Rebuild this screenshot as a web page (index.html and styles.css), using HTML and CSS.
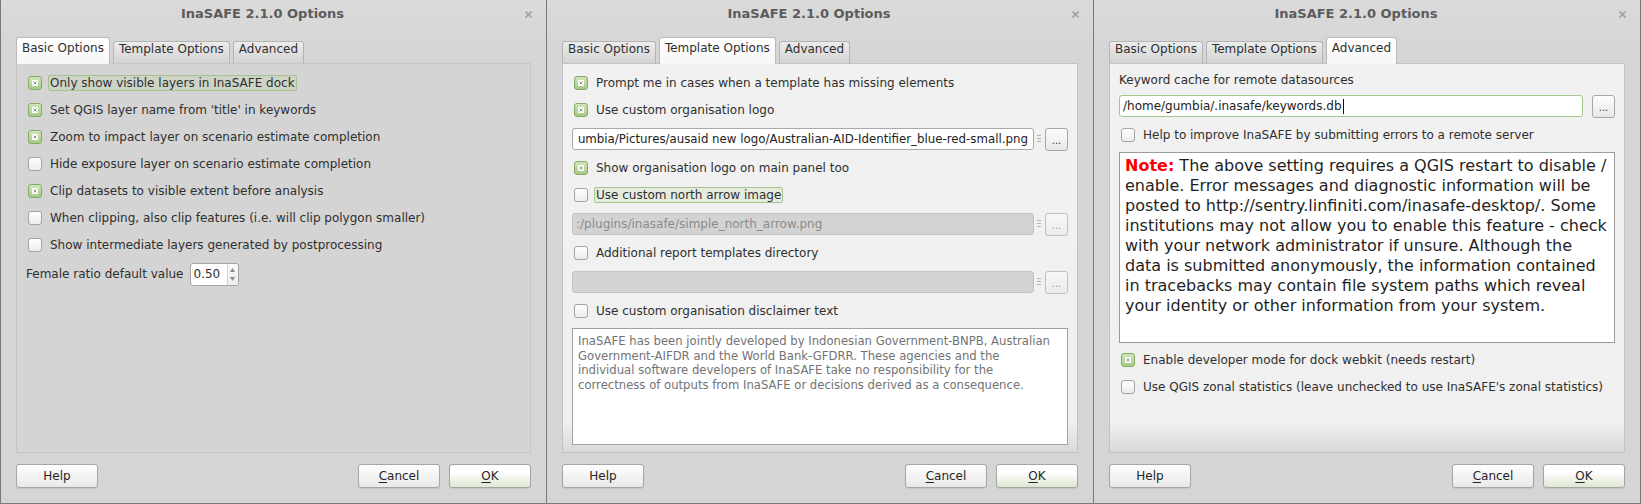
FILE: index.html
```html
<!DOCTYPE html>
<html>
<head>
<meta charset="utf-8">
<title>InaSAFE 2.1.0 Options</title>
<link rel="stylesheet" href="styles.css">
</head>
<body>
<div class="desk">

  <!-- Window 1 : Basic Options -->
  <div class="win">
    <div class="titlebar">
      <div class="title">InaSAFE 2.1.0 Options</div>
      <div class="close"><svg width="7" height="7" viewBox="0 0 7 7"><path d="M0.5 0.5L6.5 6.5M6.5 0.5L0.5 6.5" stroke="#a2a2a2" stroke-width="1.6"/></svg></div>
    </div>
    <div class="tabs">
      <div class="tab active">Basic Options</div>
      <div class="tab">Template Options</div>
      <div class="tab">Advanced</div>
    </div>
    <div class="pane pane-gray">
      <div class="cb-row"><span class="box on"><svg class="mk" width="6" height="6" viewBox="0 0 6 6"><rect width="6" height="6" fill="#fff"/><path d="M1.5 1.5L4.5 4.5M4.5 1.5L1.5 4.5" stroke="#7f8f72" stroke-width="0.9"/></svg></span><span class="lbl focus">Only show visible layers in InaSAFE dock</span></div>
      <div class="cb-row"><span class="box on"><svg class="mk" width="6" height="6" viewBox="0 0 6 6"><rect width="6" height="6" fill="#fff"/><path d="M1.5 1.5L4.5 4.5M4.5 1.5L1.5 4.5" stroke="#7f8f72" stroke-width="0.9"/></svg></span><span class="lbl">Set QGIS layer name from 'title' in keywords</span></div>
      <div class="cb-row"><span class="box on"><svg class="mk" width="6" height="6" viewBox="0 0 6 6"><rect width="6" height="6" fill="#fff"/><path d="M1.5 1.5L4.5 4.5M4.5 1.5L1.5 4.5" stroke="#7f8f72" stroke-width="0.9"/></svg></span><span class="lbl">Zoom to impact layer on scenario estimate completion</span></div>
      <div class="cb-row"><span class="box"></span><span class="lbl">Hide exposure layer on scenario estimate completion</span></div>
      <div class="cb-row"><span class="box on"><svg class="mk" width="6" height="6" viewBox="0 0 6 6"><rect width="6" height="6" fill="#fff"/><path d="M1.5 1.5L4.5 4.5M4.5 1.5L1.5 4.5" stroke="#7f8f72" stroke-width="0.9"/></svg></span><span class="lbl">Clip datasets to visible extent before analysis</span></div>
      <div class="cb-row"><span class="box"></span><span class="lbl">When clipping, also clip features (i.e. will clip polygon smaller)</span></div>
      <div class="cb-row"><span class="box"></span><span class="lbl">Show intermediate layers generated by postprocessing</span></div>
      <div class="spin-row">
        <span class="lbl">Female ratio default value</span>
        <div class="spin">
          <span class="spin-val">0.50</span>
          <span class="spin-arrows">
            <svg width="5" height="4" viewBox="0 0 5 4"><path d="M0 4L2.5 0L5 4Z" fill="#8a8a8a"/></svg>
            <svg width="5" height="4" viewBox="0 0 5 4"><path d="M0 0L2.5 4L5 0Z" fill="#8a8a8a"/></svg>
          </span>
        </div>
      </div>
    </div>
    <div class="buttons">
      <div class="btn">Help</div>
      <div class="spacer"></div>
      <div class="btn"><span><u>C</u>ancel</span></div>
      <div class="btn ok"><span><u>O</u>K</span></div>
    </div>
  </div>

  <!-- Window 2 : Template Options -->
  <div class="win">
    <div class="titlebar">
      <div class="title">InaSAFE 2.1.0 Options</div>
      <div class="close"><svg width="7" height="7" viewBox="0 0 7 7"><path d="M0.5 0.5L6.5 6.5M6.5 0.5L0.5 6.5" stroke="#a2a2a2" stroke-width="1.6"/></svg></div>
    </div>
    <div class="tabs">
      <div class="tab">Basic Options</div>
      <div class="tab active">Template Options</div>
      <div class="tab">Advanced</div>
    </div>
    <div class="pane pane-light">
      <div class="cb-row"><span class="box on"><svg class="mk" width="6" height="6" viewBox="0 0 6 6"><rect width="6" height="6" fill="#fff"/><path d="M1.5 1.5L4.5 4.5M4.5 1.5L1.5 4.5" stroke="#7f8f72" stroke-width="0.9"/></svg></span><span class="lbl">Prompt me in cases when a template has missing elements</span></div>
      <div class="cb-row"><span class="box on"><svg class="mk" width="6" height="6" viewBox="0 0 6 6"><rect width="6" height="6" fill="#fff"/><path d="M1.5 1.5L4.5 4.5M4.5 1.5L1.5 4.5" stroke="#7f8f72" stroke-width="0.9"/></svg></span><span class="lbl">Use custom organisation logo</span></div>
      <div class="file-row">
        <div class="line scrolled"><span>umbia/Pictures/ausaid new logo/Australian-AID-Identifier_blue-red-small.png</span></div>
        <span class="grip"></span>
        <div class="dots">...</div>
      </div>
      <div class="cb-row"><span class="box on"><svg class="mk" width="6" height="6" viewBox="0 0 6 6"><rect width="6" height="6" fill="#fff"/><path d="M1.5 1.5L4.5 4.5M4.5 1.5L1.5 4.5" stroke="#7f8f72" stroke-width="0.9"/></svg></span><span class="lbl">Show organisation logo on main panel too</span></div>
      <div class="cb-row"><span class="box"></span><span class="lbl focus">Use custom north arrow image</span></div>
      <div class="file-row">
        <div class="line disabled"><span>:/plugins/inasafe/simple_north_arrow.png</span></div>
        <span class="grip"></span>
        <div class="dots off">...</div>
      </div>
      <div class="cb-row"><span class="box"></span><span class="lbl">Additional report templates directory</span></div>
      <div class="file-row">
        <div class="line disabled"></div>
        <span class="grip"></span>
        <div class="dots off">...</div>
      </div>
      <div class="cb-row"><span class="box"></span><span class="lbl">Use custom organisation disclaimer text</span></div>
      <div class="disclaimer">InaSAFE has been jointly developed by Indonesian Government-BNPB, Australian<br>Government-AIFDR and the World Bank-GFDRR. These agencies and the<br>individual software developers of InaSAFE take no responsibility for the<br>correctness of outputs from InaSAFE or decisions derived as a consequence.</div>
    </div>
    <div class="buttons">
      <div class="btn">Help</div>
      <div class="spacer"></div>
      <div class="btn"><span><u>C</u>ancel</span></div>
      <div class="btn ok"><span><u>O</u>K</span></div>
    </div>
  </div>

  <!-- Window 3 : Advanced -->
  <div class="win">
    <div class="titlebar">
      <div class="title">InaSAFE 2.1.0 Options</div>
      <div class="close"><svg width="7" height="7" viewBox="0 0 7 7"><path d="M0.5 0.5L6.5 6.5M6.5 0.5L0.5 6.5" stroke="#a2a2a2" stroke-width="1.6"/></svg></div>
    </div>
    <div class="tabs">
      <div class="tab">Basic Options</div>
      <div class="tab">Template Options</div>
      <div class="tab active">Advanced</div>
    </div>
    <div class="pane pane-light pane-adv">
      <div class="label-row">Keyword cache for remote datasources</div>
      <div class="edit-row">
        <div class="line focused"><span>/home/gumbia/.inasafe/keywords.db</span><span class="caret"></span></div>
        <div class="dots">...</div>
      </div>
      <div class="cb-row"><span class="box"></span><span class="lbl">Help to improve InaSAFE by submitting errors to a remote server</span></div>
      <div class="note"><b class="note-head">Note:</b> The above setting requires a QGIS restart to disable /<br>enable. Error messages and diagnostic information will be<br>posted to http://sentry.linfiniti.com/inasafe-desktop/. Some<br>institutions may not allow you to enable this feature - check<br>with your network administrator if unsure. Although the<br>data is submitted anonymously, the information contained<br>in tracebacks may contain file system paths which reveal<br>your identity or other information from your system.</div>
      <div class="cb-row"><span class="box on"><svg class="mk" width="6" height="6" viewBox="0 0 6 6"><rect width="6" height="6" fill="#fff"/><path d="M1.5 1.5L4.5 4.5M4.5 1.5L1.5 4.5" stroke="#7f8f72" stroke-width="0.9"/></svg></span><span class="lbl">Enable developer mode for dock webkit (needs restart)</span></div>
      <div class="cb-row"><span class="box"></span><span class="lbl">Use QGIS zonal statistics (leave unchecked to use InaSAFE's zonal statistics)</span></div>
    </div>
    <div class="buttons">
      <div class="btn">Help</div>
      <div class="spacer"></div>
      <div class="btn"><span><u>C</u>ancel</span></div>
      <div class="btn ok"><span><u>O</u>K</span></div>
    </div>
  </div>

</div>
</body>
</html>
```

FILE: styles.css
```css
* { box-sizing: border-box; }

html, body {
  margin: 0;
  padding: 0;
  width: 1641px;
  height: 504px;
  overflow: hidden;
  background: #d6d6d6;
}

body {
  font-family: "DejaVu Sans", "Liberation Sans", sans-serif;
  font-size: 12px;
  color: #2f2f2f;
}

.desk {
  display: flex;
  width: 1641px;
  height: 504px;
}

.win {
  width: 547px;
  height: 504px;
  flex: none;
  display: flex;
  flex-direction: column;
  background: linear-gradient(#dadada, #d5d5d5 60px, #d5d5d5);
  border-left: 1px solid #787878;
  border-bottom: 1px solid #7a7a7a;
}

.win:first-child { width: 546px; }

.win:last-child {
  width: 548px;
  border-right: 1px solid #787878;
}

/* title bar */
.titlebar {
  height: 28px;
  display: flex;
  align-items: center;
}

.title {
  flex: 1;
  text-align: center;
  font-weight: bold;
  font-size: 13px;
  color: #5c5c5c;
  line-height: 16px;
}

.close {
  width: 22px;
  display: flex;
  align-items: center;
  padding-left: 1px;
  height: 16px;
}

/* tabs */
.tabs {
  display: flex;
  align-items: flex-end;
  height: 26px;
  margin: 9px 0 0 15px;
}

.tab {
  height: 22px;
  padding: 0 5px;
  margin-right: 3px;
  line-height: 14px;
  border: 1px solid #b4b4b4;
  border-bottom: none;
  border-radius: 3px 3px 0 0;
  background: linear-gradient(#ececec, #d3d3d3);
  color: #2f2f2f;
  white-space: nowrap;
}

.tab.active {
  padding-top: 3px;
  background: linear-gradient(#ffffff, #f6f6f6);
  border-color: #bababa;
  position: relative;
  z-index: 1;
  margin-bottom: -1px;
  height: 27px;
}

/* pane */
.pane {
  height: 390px;
  margin: 0 15px;
  border: 1px solid #c4c4c4;
  padding: 9px 9px 0 9px;
  display: flex;
  flex-direction: column;
  gap: 7px;
}

.pane-gray {
  background: #d4d4d4;
  border-color: #c6c6c6;
}

.pane-light {
  background: linear-gradient(#f1f1f1 0, #f0f0f0 calc(100% - 30px), #d9d9d9 100%);
  border-color: #c3c3c3;
}

.pane-adv { padding-top: 6px; }

/* checkbox rows */
.cb-row {
  height: 20px;
  flex: none;
  display: flex;
  align-items: center;
  padding-left: 2px;
  white-space: nowrap;
}

.box {
  width: 14px;
  height: 14px;
  flex: none;
  margin-right: 8px;
  border: 1px solid #a3a3a3;
  border-radius: 3px;
  background: linear-gradient(#ffffff, #ececec);
  display: flex;
  align-items: center;
  justify-content: center;
}

.box.on {
  border-color: #86aa66;
  background: linear-gradient(#cfe6b9, #a6ca86);
}

.mk { display: block; }

.lbl {
  line-height: 14px;
  white-space: nowrap;
}

.lbl.focus {
  margin-left: -2px;
  padding: 0 1px;
  border: 1px solid #a8c48e;
  border-radius: 2px;
  background: rgba(166, 204, 128, 0.16);
}

/* spin box */
.spin-row {
  height: 24px;
  flex: none;
  display: flex;
  align-items: center;
}

.spin {
  margin-left: 6px;
  width: 49px;
  height: 23px;
  display: flex;
  border: 1px solid #a4a4a4;
  border-radius: 3px;
  background: #fff;
}

.spin-val {
  flex: 1;
  padding-left: 3px;
  line-height: 21px;
}

.spin-arrows {
  width: 11px;
  border-left: 1px solid #d2d2d2;
  display: flex;
  flex-direction: column;
  align-items: center;
  justify-content: center;
  gap: 5px;
  background: linear-gradient(#fafafa, #ededed);
  border-radius: 0 2px 2px 0;
}

.spin-arrows svg { display: block; }

/* line edits */
.file-row, .edit-row {
  height: 24px;
  flex: none;
  display: flex;
  align-items: center;
}

.edit-row { margin-top: -3px; }

.line {
  flex: 1;
  height: 22px;
  border: 1px solid #a8a8a8;
  border-radius: 3px;
  background: #fff;
  display: flex;
  align-items: center;
  overflow: hidden;
  white-space: nowrap;
  padding: 0 3px;
  color: #222;
}

.line.scrolled {
  justify-content: flex-end;
  padding: 0 5px 0 1px;
  font-size: 11.8px;
}

.line.disabled {
  background: #d3d3d3;
  border-color: #c3c3c3;
  color: #8b8b8b;
}

.line.focused {
  border-color: #a6c58a;
  padding-left: 3px;
}

.caret {
  width: 1px;
  height: 15px;
  background: #111;
  margin-left: 1px;
}

.grip {
  width: 4px;
  height: 9px;
  margin: 0 4px 0 3px;
  background: repeating-linear-gradient(#b3b3b3 0 1px, transparent 1px 3px);
}

.edit-row .line { margin-right: 9px; }

.dots {
  width: 23px;
  height: 23px;
  flex: none;
  border: 1px solid #a6a6a6;
  border-radius: 3px;
  background: linear-gradient(#fdfdfd, #e8e8e8);
  display: flex;
  align-items: flex-end;
  justify-content: center;
  padding-bottom: 4px;
  font-size: 10px;
  line-height: 10px;
  color: #333;
}

.dots.off {
  color: #9a9a9a;
  border-color: #c0c0c0;
  background: linear-gradient(#f8f8f8, #ebebeb);
}

/* label / note / disclaimer */
.label-row {
  height: 20px;
  flex: none;
  line-height: 20px;
  white-space: nowrap;
}

.note {
  height: 191px;
  flex: none;
  background: #fff;
  border: 1px solid #9c9c9c;
  padding: 3px 5px;
  font-size: 16px;
  line-height: 20px;
  color: #1f1f1f;
  white-space: nowrap;
  overflow: hidden;
}

.note-head { color: #ff0000; }

.disclaimer {
  height: 117px;
  flex: none;
  background: #fff;
  border: 1px solid #a2a2a2;
  padding: 5px 5px;
  font-size: 11.65px;
  line-height: 14.7px;
  color: #737373;
  white-space: nowrap;
  overflow: hidden;
}

/* buttons */
.buttons {
  display: flex;
  margin: 11px 15px 0 15px;
  height: 24px;
}

.spacer { flex: 1; }

.btn {
  width: 82px;
  height: 24px;
  border: 1px solid #a5a5a5;
  border-radius: 3px;
  background: linear-gradient(#fefefe, #e8e8e8);
  box-shadow: 0 1px 1px rgba(0, 0, 0, 0.08);
  display: flex;
  align-items: center;
  justify-content: center;
  color: #262626;
}

.btn.ok {
  margin-left: 9px;
  background: linear-gradient(#fefefe 35%, #dde7d1);
}

.btn u { text-decoration-thickness: 1px; text-underline-offset: 2px; }
```
